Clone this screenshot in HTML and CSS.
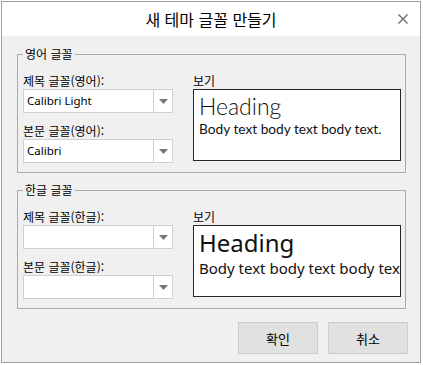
FILE: index.html
```html
<!DOCTYPE html>
<html lang="ko">
<head>
    <meta charset="UTF-8">
    <title>새 테마 글꼴 만들기</title>
    <link rel="stylesheet" href="styles.css">
</head>
<body>
    <div class="dialog">
        <div class="titlebar">
            <span></span>
            <span class="title">새 테마 글꼴 만들기</span>
            <svg class="close" width="10" height="10" viewBox="0 0 10 10">
                <path d="M0.5 0.5 L9.5 9.5 M9.5 0.5 L0.5 9.5" stroke="#6b6b6b" stroke-width="1.4" fill="none"/>
            </svg>
        </div>

        <div class="content">
            <fieldset class="group">
                <legend>영어 글꼴</legend>
                <div class="col">
                    <label class="field-label">제목 글꼴(영어):</label>
                    <div class="select">
                        <span class="select-value">Calibri Light</span>
                        <span class="select-arrow"><svg width="9" height="5" viewBox="0 0 9 5"><path d="M0 0 H9 L4.5 5 Z" fill="#767676"/></svg></span>
                    </div>
                    <label class="field-label second">본문 글꼴(영어):</label>
                    <div class="select">
                        <span class="select-value">Calibri</span>
                        <span class="select-arrow"><svg width="9" height="5" viewBox="0 0 9 5"><path d="M0 0 H9 L4.5 5 Z" fill="#767676"/></svg></span>
                    </div>
                </div>
                <div class="col">
                    <label class="field-label">보기</label>
                    <div class="preview preview-en">
                        <div class="preview-heading">Heading</div>
                        <div class="preview-body">Body text body text body text.</div>
                    </div>
                </div>
            </fieldset>

            <fieldset class="group group-ko">
                <legend>한글 글꼴</legend>
                <div class="col">
                    <label class="field-label">제목 글꼴(한글):</label>
                    <div class="select">
                        <span class="select-value"></span>
                        <span class="select-arrow"><svg width="9" height="5" viewBox="0 0 9 5"><path d="M0 0 H9 L4.5 5 Z" fill="#767676"/></svg></span>
                    </div>
                    <label class="field-label second">본문 글꼴(한글):</label>
                    <div class="select">
                        <span class="select-value"></span>
                        <span class="select-arrow"><svg width="9" height="5" viewBox="0 0 9 5"><path d="M0 0 H9 L4.5 5 Z" fill="#767676"/></svg></span>
                    </div>
                </div>
                <div class="col">
                    <label class="field-label">보기</label>
                    <div class="preview preview-ko">
                        <div class="preview-heading">Heading</div>
                        <div class="preview-body">Body text body text body text.</div>
                    </div>
                </div>
            </fieldset>

            <div class="actions">
                <button class="btn">확인</button>
                <button class="btn">취소</button>
            </div>
        </div>
    </div>
</body>
</html>
```

FILE: styles.css
```css
body {
    margin: 0;
    background-color: #fff;
    font-family: "Noto Sans CJK KR", sans-serif;
    color: #000;
}

.dialog {
    margin: 1px 0 0 1px;
    width: 420px;
    height: 362px;
    box-sizing: border-box;
    border: 1px solid #a0a0a0;
    background-color: #f0f0f0;
    display: flex;
    flex-direction: column;
}

.titlebar {
    height: 34px;
    background-color: #fff;
    display: grid;
    grid-template-columns: 1fr auto 1fr;
    align-items: center;
}

.title {
    font-size: 16px;
    line-height: 20px;
}

.close {
    justify-self: end;
    margin-right: 12px;
}

.content {
    flex: 1;
    padding: 10px 14px 0 15px;
}

.group {
    margin: 0;
    padding: 11px 4px 9px 5px;
    border: 1px solid #a9a9a9;
    display: grid;
    grid-template-columns: 150px 208px;
    column-gap: 20px;
    min-width: 0;
}

.group-ko {
    margin-top: 9px;
}

.group legend {
    padding: 0 2px;
    font-size: 12px;
    line-height: 16px;
}

.col {
    display: flex;
    flex-direction: column;
}

.field-label {
    font-size: 12px;
    line-height: 16px;
}

.field-label.second {
    margin-top: 10px;
}

.select {
    height: 24px;
    box-sizing: border-box;
    border: 1px solid #d0d0d0;
    background-color: #fff;
    display: flex;
}

.select-value {
    flex: 1;
    padding-left: 3px;
    font-family: "Noto Sans", sans-serif;
    font-size: 11.5px;
    line-height: 22px;
}

.select-arrow {
    width: 18px;
    border-left: 1px solid #d0d0d0;
    display: flex;
    align-items: center;
    justify-content: center;
}

.preview {
    height: 72px;
    box-sizing: border-box;
    border: 1px solid #262626;
    background-color: #fff;
    padding: 2px 0 0 5px;
    overflow: hidden;
    white-space: nowrap;
    color: #111;
}

.preview-en .preview-heading {
    font-family: Lato, sans-serif;
    font-weight: 300;
    font-size: 23px;
    line-height: 28px;
}

.preview-en .preview-body {
    font-family: Lato, sans-serif;
    font-size: 13.7px;
    line-height: 18px;
}

.preview-ko .preview-heading {
    font-family: "Noto Sans", sans-serif;
    font-size: 24px;
    line-height: 30px;
}

.preview-ko .preview-body {
    font-family: "Noto Sans", sans-serif;
    font-size: 15px;
    line-height: 20px;
}

.actions {
    display: flex;
    justify-content: flex-end;
    gap: 10px;
    padding: 13px 0 0 0;
    margin-right: -2px;
}

.btn {
    width: 80px;
    height: 32px;
    border: 1px solid #cccccc;
    background-color: #e1e1e1;
    font-family: "Noto Sans CJK KR", sans-serif;
    font-size: 13px;
    color: #000;
    padding: 0;
}
```
